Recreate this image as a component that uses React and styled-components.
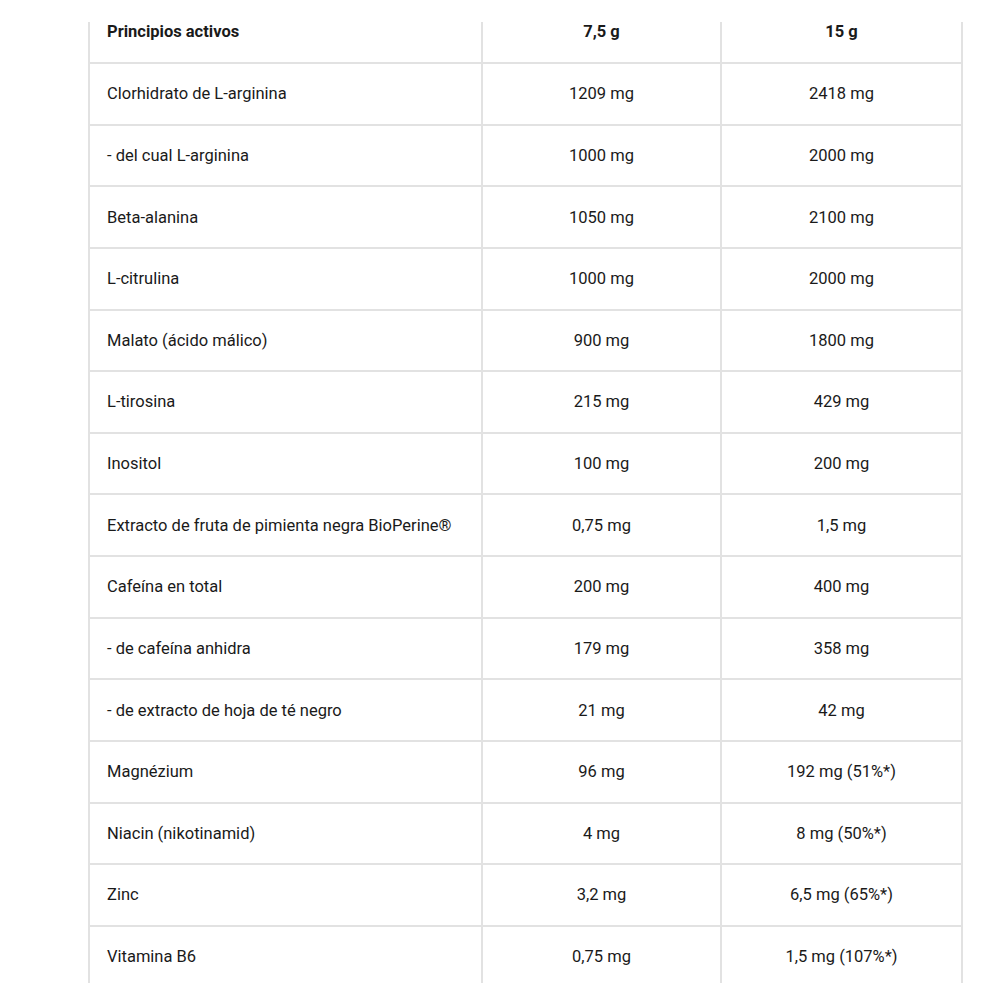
import React from "react";
import styled, { createGlobalStyle } from "styled-components";

const Global = createGlobalStyle`
  html, body { margin: 0; padding: 0; background: #fff; }
  body { font-family: Roboto, "Liberation Sans", Arial, sans-serif; color: #222; }
`;

const Page = styled.div`
  width: 1000px;
  height: 1000px;
  overflow: hidden;
  padding: 22px 0 0 88px;
  box-sizing: border-box;
`;

const Table = styled.div`
  width: 875px;
  height: 961px;
  overflow: hidden;
  display: flex;
  flex-direction: column;
`;

const Row = styled.div`
  display: grid;
  grid-template-columns: 393px 239px 243px;
  flex: none;
  height: ${(p) => (p.$head ? "40px" : "61.64px")};
  box-sizing: border-box;
  border-top: ${(p) => (p.$head ? "none" : "2px solid #e2e2e2")};
`;

const Cell = styled.div`
  display: flex;
  align-items: ${(p) => (p.$head ? "flex-start" : "center")};
  justify-content: ${(p) => (p.$first ? "flex-start" : "center")};
  padding: ${(p) => (p.$head ? "1px" : "0")} 0 0 ${(p) => (p.$first ? "17px" : "0")};
  border-left: 2px solid #e2e2e2;
  border-right: ${(p) => (p.$last ? "2px solid #e2e2e2" : "none")};
  box-sizing: border-box;
  font-size: 16.5px;
  line-height: 17px;
  font-weight: ${(p) => (p.$head ? 700 : 400)};
  color: #1a1a1a;
  white-space: nowrap;
`;

const rows = [
  ["Clorhidrato de L-arginina", "1209 mg", "2418 mg"],
  ["- del cual L-arginina", "1000 mg", "2000 mg"],
  ["Beta-alanina", "1050 mg", "2100 mg"],
  ["L-citrulina", "1000 mg", "2000 mg"],
  ["Malato (ácido málico)", "900 mg", "1800 mg"],
  ["L-tirosina", "215 mg", "429 mg"],
  ["Inositol", "100 mg", "200 mg"],
  ["Extracto de fruta de pimienta negra BioPerine®", "0,75 mg", "1,5 mg"],
  ["Cafeína en total", "200 mg", "400 mg"],
  ["- de cafeína anhidra", "179 mg", "358 mg"],
  ["- de extracto de hoja de té negro", "21 mg", "42 mg"],
  ["Magnézium", "96 mg", "192 mg (51%*)"],
  ["Niacin (nikotinamid)", "4 mg", "8 mg (50%*)"],
  ["Zinc", "3,2 mg", "6,5 mg (65%*)"],
  ["Vitamina B6", "0,75 mg", "1,5 mg (107%*)"],
];

export default function App() {
  return (
    <>
      <Global />
      <Page>
        <Table>
          <Row $head>
            <Cell $head $first>Principios activos</Cell>
            <Cell $head>7,5 g</Cell>
            <Cell $head $last>15 g</Cell>
          </Row>
          {rows.map((r, i) => (
            <Row key={i}>
              <Cell $first>{r[0]}</Cell>
              <Cell>{r[1]}</Cell>
              <Cell $last>{r[2]}</Cell>
            </Row>
          ))}
        </Table>
      </Page>
    </>
  );
}
